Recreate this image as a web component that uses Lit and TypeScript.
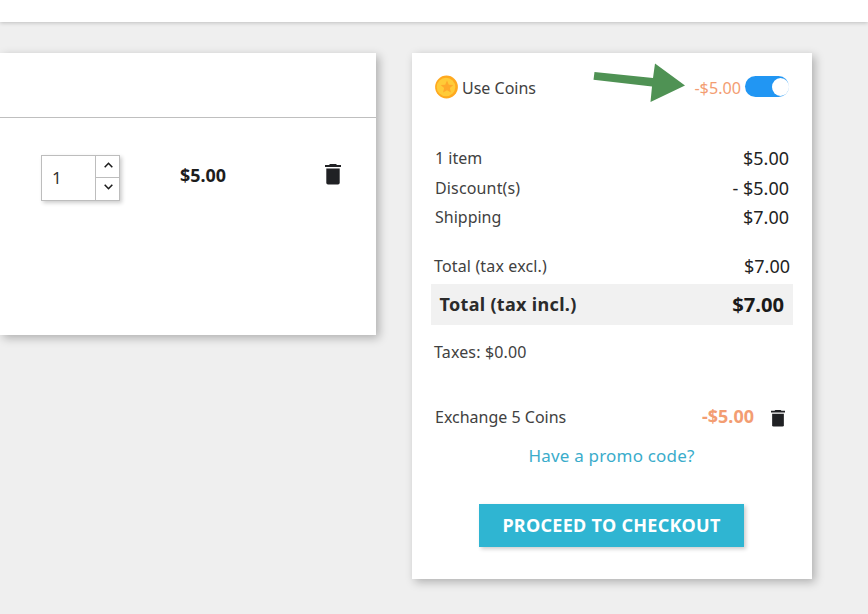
import { LitElement, html, css, svg } from "lit";
import { customElement, property } from "lit/decorators.js";

@customElement("trash-icon")
class TrashIcon extends LitElement {
  static styles = css`
    :host { display: block; }
    svg { display: block; width: 100%; height: 100%; }
  `;
  render() {
    return html`<svg viewBox="0 0 16 21" preserveAspectRatio="none" fill="#202124">
      <path d="M5 0h6l1 1h4v2H0V1h4z"/><path d="M1.3 4.5h13.4v14.3q0 1.7-1.7 1.7H3q-1.7 0-1.7-1.7z"/>
    </svg>`;
  }
}

@customElement("toggle-switch")
class ToggleSwitch extends LitElement {
  @property({ type: Boolean }) on = false;
  static styles = css`
    :host { display: block; }
    .track { box-sizing: border-box; width: 44px; height: 21px; border-radius: 11px; background: linear-gradient(90deg, #2196f3 38px, #8cc8f8 44px); display: flex; justify-content: flex-end; align-items: center; }
    .knob { width: 17px; height: 18px; border-radius: 50%; background: #fff; }
  `;
  render() {
    return html`<div class="track"><div class="knob"></div></div>`;
  }
}

const chevron = (d: string) => svg`<path d=${d} fill="none" stroke="#1c1c1c" stroke-width="1.6"/>`;

@customElement("cart-line")
class CartLine extends LitElement {
  static styles = css`
    :host { display: block; width: 376px; height: 282px; background: #fff; box-shadow: 3px 3px 9px rgba(0,0,0,.27); font-family: "Noto Sans", sans-serif; }
    .head { height: 64px; border-bottom: 1px solid #bfbfbf; }
    .line { display: flex; align-items: flex-start; padding: 37px 0 0 41px; }
    .qty { box-sizing: border-box; width: 79px; height: 46px; border: 1px solid #bdbdbd; display: flex; background: #fff; box-shadow: 2px 2px 4px rgba(0,0,0,.2); }
    .num { flex: 1; padding-left: 10px; font-size: 17px; line-height: 43px; color: #333; }
    .steps { width: 23px; border-left: 1px solid #bdbdbd; display: flex; flex-direction: column; }
    .step { height: 21px; display: flex; align-items: center; justify-content: center; }
    .step + .step { border-top: 1px solid #bdbdbd; }
    .step svg { width: 9px; height: 6px; margin: 0 0 4px 2px; }
    .price { margin-left: 60px; width: 46px; font-size: 17.9px; font-weight: 700; line-height: 40px; color: #1d1d1d; white-space: nowrap; }
    trash-icon { width: 16px; height: 21px; margin: 9px 0 0 99px; }
  `;
  render() {
    return html`<div class="head"></div>
      <div class="line">
        <div class="qty"><div class="num">1</div>
          <div class="steps">
            <div class="step"><svg viewBox="0 0 9 6">${chevron("M.7 5.2 4.5 1.3 8.3 5.2")}</svg></div>
            <div class="step"><svg viewBox="0 0 9 6">${chevron("M.7 .8 4.5 4.7 8.3 .8")}</svg></div>
          </div>
        </div>
        <div class="price">$5.00</div>
        <trash-icon></trash-icon>
      </div>`;
  }
}

@customElement("cart-summary")
class CartSummary extends LitElement {
  static styles = css`
    :host { display: block; box-sizing: border-box; width: 400px; height: 526px; padding: 20px 23px 0; background: #fff; box-shadow: 3px 3px 9px rgba(0,0,0,.27); font-family: "Noto Sans", sans-serif; font-size: 16px; color: #414141; white-space: nowrap; }
    .row { display: flex; align-items: center; height: 29.4px; }
    .row > :last-child { margin-left: auto; }
    .amount { font-size: 18px; color: #232323; }
    .coins { height: 29px; margin-bottom: 41.5px; }
    .coin { width: 24px; height: 24px; margin: -1px 3px 0 0; }
    .arrow { width: 93px; height: 40px; margin: -10px 0 0 57px; }
    .credit { display: flex; align-items: center; color: #f39d72; font-size: 16.2px; }
    .credit toggle-switch { margin-left: 4px; margin-top: -2px; }
    .discount { letter-spacing: .15px; }
    .excl { margin: 19.5px -1px 0; }
    .excl .label, .taxes { letter-spacing: .15px; }
    .total { height: 41px; margin: 3px -4px 0; padding: 0 9px 0 8.5px; background: #f1f1f1; font-weight: 700; font-size: 18px; letter-spacing: .32px; color: #2b2b2b; }
    .total .amount { font-size: 20.2px; letter-spacing: 0; color: #1a1a1a; }
    .taxes { margin: 16px -1px 0; }
    .exchange { margin-top: 40px; }
    .off { display: flex; align-items: center; color: #f39d72; font-weight: 700; font-size: 18px; }
    .off span { margin-top: -2px; }
    .off trash-icon { width: 14px; height: 17px; margin: 2px 4px 0 17px; }
    .promo { text-align: center; color: #3aaccb; font-size: 17px; letter-spacing: .2px; line-height: 24px; margin: 12px 1px 0 0; }
    .checkout { width: 265px; height: 43px; margin: 36px 0 0 44px; background: #2fb5d2; color: #fff; text-align: center; font-weight: 700; font-size: 18px; letter-spacing: .3px; line-height: 43px; box-shadow: 2px 2px 4px rgba(0,0,0,.2); }
  `;
  render() {
    return html`
      <div class="row coins">
        <svg class="coin" viewBox="0 0 24 24">
          <circle cx="11.5" cy="12" r="11.4" fill="#ffa91f"/><circle cx="11" cy="12" r="9.3" fill="#ffcb38"/>
          <path d="M12 5.5l1.8 4.2 4.5.4-3.4 3 1 4.5L12 15.2l-3.9 2.4 1-4.5-3.4-3 4.5-.4z" fill="#ffa92a"/>
        </svg>
        <span class="use">Use Coins</span>
        <svg class="arrow" viewBox="0 0 93 40"><path d="M1.5 9 60 15 62 .5 92 22.5 57.5 39 59 23.5 .5 16.8z" fill="#4f9254"/></svg>
        <div class="credit"><span>-$5.00</span><toggle-switch on></toggle-switch></div>
      </div>
      <div class="row"><span>1 item</span><span class="amount">$5.00</span></div>
      <div class="row"><span class="discount">Discount(s)</span><span class="amount">- $5.00</span></div>
      <div class="row"><span>Shipping</span><span class="amount">$7.00</span></div>
      <div class="row excl"><span class="label">Total (tax excl.)</span><span class="amount">$7.00</span></div>
      <div class="row total"><span>Total (tax incl.)</span><span class="amount">$7.00</span></div>
      <div class="taxes">Taxes: $0.00</div>
      <div class="row exchange"><span>Exchange 5 Coins</span><div class="off"><span>-$5.00</span><trash-icon></trash-icon></div></div>
      <div class="promo">Have a promo code?</div>
      <div class="checkout">PROCEED TO CHECKOUT</div>`;
  }
}

@customElement("app-root")
class AppRoot extends LitElement {
  static styles = css`
    :host { display: block; height: 614px; background: #efefef; overflow: hidden; }
    .top { height: 22px; background: #fff; box-shadow: 0 1px 4px rgba(0,0,0,.2); }
    .columns { display: flex; align-items: flex-start; gap: 36px; padding-top: 31px; }
  `;
  render() {
    return html`<div class="top"></div><div class="columns"><cart-line></cart-line><cart-summary></cart-summary></div>`;
  }
}
